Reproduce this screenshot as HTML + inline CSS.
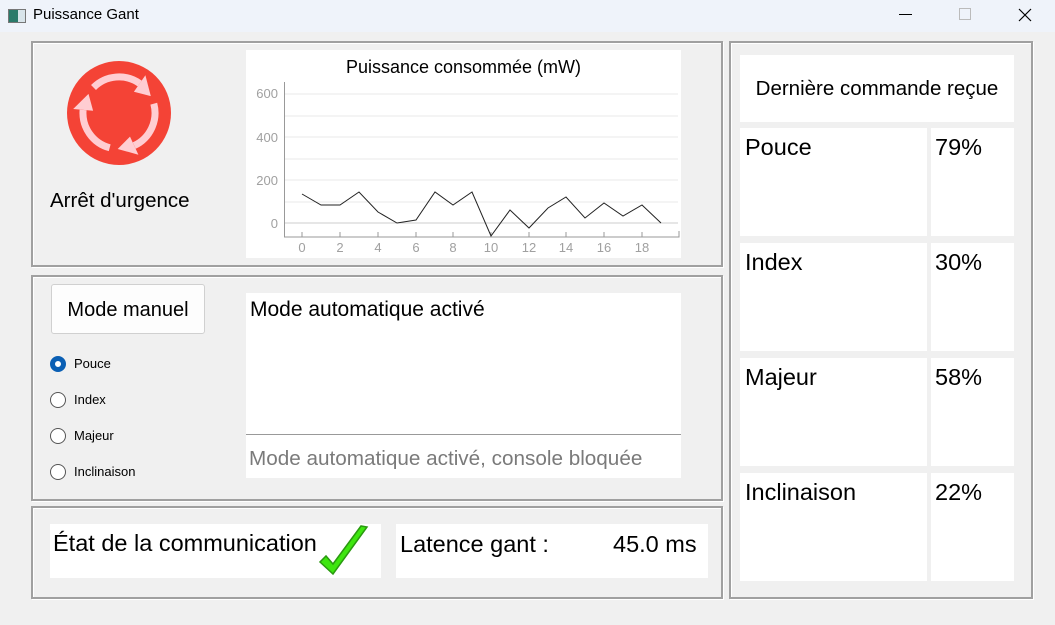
<!DOCTYPE html>
<html><head><meta charset="utf-8"><style>
*{margin:0;padding:0;box-sizing:border-box}
body{width:1055px;height:625px;background:#f0f0f0;font-family:"Liberation Sans","DejaVu Sans",sans-serif;position:relative;overflow:hidden;color:#000}
.a{position:absolute}
.gb{position:absolute;border:2px solid #a0a0a0;box-shadow:inset 1px 1px 0 #fff,1px 1px 0 #fff}
.w{position:absolute;background:#fff}
.radio{position:absolute;left:50px;width:16px;height:16px;border:1.5px solid #555;border-radius:50%;background:#fff}
.rl{position:absolute;left:74px;font-size:13px}
.r{font-size:23.5px}
</style></head><body>
<div class="a" style="left:0;top:0;width:1055px;height:32px;background:#eff3fa"></div>
<div class="a" style="left:8px;top:9px;width:18px;height:14px;border:1px solid #777;background:linear-gradient(90deg,#2a7a6a 0 55%,#d8e4ea 55%)"></div>
<div class="a" style="left:33px;top:6px;font-size:15px">Puissance Gant</div>
<div class="a" style="left:899px;top:14px;width:13px;height:1px;background:#000"></div>
<div class="a" style="left:959px;top:8px;width:12px;height:12px;border:1px solid #bbb"></div>
<svg class="a" style="left:1018px;top:8px" width="14" height="14"><path d="M1 1L13 13M13 1L1 13" stroke="#000" stroke-width="1.2"/></svg>

<div class="gb" style="left:31px;top:41px;width:692px;height:226px"></div>
<div class="gb" style="left:31px;top:275px;width:692px;height:226px"></div>
<div class="gb" style="left:31px;top:506px;width:692px;height:93px"></div>
<div class="gb" style="left:729px;top:41px;width:304px;height:558px"></div>

<svg class="a" style="left:67px;top:61px" width="104" height="104" viewBox="0 0 104 104">
<circle cx="52" cy="52" r="52" fill="#f44336"/>
<g fill="none" stroke="#ffcdd2" stroke-width="7">
<path d="M26.5 26.5A36 36 0 0 1 72.7 22.5"/>
<path d="M86.8 42.7A36 36 0 0 1 67.2 84.6"/>
<path d="M42.7 86.8A36 36 0 0 1 16.1 48.9"/>
</g>
<g fill="#ffcdd2"><path d="M66.9 30.7L78.4 14.3L83.8 35.1Z"/><path d="M63 75.6L71.4 93.7L50.7 88Z"/><path d="M26.1 49.7L6.2 48L21.5 32.9Z"/></g>
</svg>
<div class="a" style="left:50px;top:189px;font-size:20.5px">Arrêt d'urgence</div>

<div class="w" style="left:246px;top:50px;width:435px;height:208px"></div>
<div class="a" style="left:246px;top:57px;width:435px;text-align:center;font-size:18px">Puissance consommée (mW)</div>
<svg class="a" style="left:246px;top:50px" width="435" height="208">
<g stroke="#e8e8e8" stroke-width="1"><line x1="39" y1="44" x2="432" y2="44"/><line x1="39" y1="66" x2="432" y2="66"/><line x1="39" y1="87" x2="432" y2="87"/><line x1="39" y1="109" x2="432" y2="109"/><line x1="39" y1="130" x2="432" y2="130"/><line x1="39" y1="152" x2="432" y2="152"/></g>
<line x1="39" y1="173" x2="432" y2="173" stroke="#ccc"/>
<path d="M38.5 32V187H433V181" stroke="#999" fill="none"/>
<g stroke="#999"><line x1="56" y1="182" x2="56" y2="187"/><line x1="94" y1="182" x2="94" y2="187"/><line x1="132" y1="182" x2="132" y2="187"/><line x1="170" y1="182" x2="170" y2="187"/><line x1="207" y1="182" x2="207" y2="187"/><line x1="245" y1="182" x2="245" y2="187"/><line x1="283" y1="182" x2="283" y2="187"/><line x1="320" y1="182" x2="320" y2="187"/><line x1="358" y1="182" x2="358" y2="187"/><line x1="396" y1="182" x2="396" y2="187"/></g>
<g fill="#a0a0a0" font-size="13" font-family="Liberation Sans,sans-serif" text-anchor="end"><text x="32" y="48">600</text><text x="32" y="92">400</text><text x="32" y="135">200</text><text x="32" y="178">0</text></g>
<g fill="#a0a0a0" font-size="13" font-family="Liberation Sans,sans-serif" text-anchor="middle"><text x="56" y="202">0</text><text x="94" y="202">2</text><text x="132" y="202">4</text><text x="170" y="202">6</text><text x="207" y="202">8</text><text x="245" y="202">10</text><text x="283" y="202">12</text><text x="320" y="202">14</text><text x="358" y="202">16</text><text x="396" y="202">18</text></g>
<polyline fill="none" stroke="#222" stroke-width="1" points="56,144 75,155 94,155 113,142 132,162 151,173 170,170 189,142 207,155 226,142 245,186 264,160 283,178 302,158 320,147 339,168 358,153 377,166 396,155 415,173"/>
</svg>

<div class="a" style="left:51px;top:284px;width:154px;height:50px;background:#fdfdfd;border:1px solid #d0d0d0;border-radius:3px;font-size:20px;text-align:center;line-height:50px">Mode manuel</div>
<div class="radio" style="top:356px;border:5px solid #0a5fb4"></div><div class="rl" style="top:356px">Pouce</div>
<div class="radio" style="top:392px"></div><div class="rl" style="top:392px">Index</div>
<div class="radio" style="top:428px"></div><div class="rl" style="top:428px">Majeur</div>
<div class="radio" style="top:464px"></div><div class="rl" style="top:464px">Inclinaison</div>

<div class="w" style="left:246px;top:293px;width:435px;height:141px"></div>
<div class="a" style="left:250px;top:298px;font-size:21px">Mode automatique activé</div>
<div class="a" style="left:246px;top:434px;width:435px;height:1px;background:#999"></div>
<div class="w" style="left:246px;top:435px;width:435px;height:43px"></div>
<div class="a" style="left:249px;top:447px;font-size:20.7px;color:#7a7a7a">Mode automatique activé, console bloquée</div>

<div class="w" style="left:50px;top:524px;width:331px;height:54px"></div>
<div class="a r" style="left:53px;top:530px">État de la communication</div>
<svg class="a" style="left:317px;top:524px" width="52" height="52"><path d="M3 38L16 50L50 3L44 2L16 40L9 32Z" fill="#3ee60f" stroke="#2a9a10" stroke-width="1.5"/></svg>
<div class="w" style="left:396px;top:524px;width:312px;height:54px"></div>
<div class="a r" style="left:400px;top:531px">Latence gant :</div>
<div class="a r" style="left:613px;top:531px">45.0 ms</div>

<div class="w" style="left:740px;top:55px;width:274px;height:67px;font-size:20.5px;text-align:center;line-height:68px">Dernière commande reçue</div>
<div class="w" style="left:740px;top:128px;width:187px;height:108px"></div><div class="w" style="left:931px;top:128px;width:83px;height:108px"></div>
<div class="w" style="left:740px;top:243px;width:187px;height:108px"></div><div class="w" style="left:931px;top:243px;width:83px;height:108px"></div>
<div class="w" style="left:740px;top:358px;width:187px;height:108px"></div><div class="w" style="left:931px;top:358px;width:83px;height:108px"></div>
<div class="w" style="left:740px;top:473px;width:187px;height:108px"></div><div class="w" style="left:931px;top:473px;width:83px;height:108px"></div>
<div class="a r" style="left:745px;top:134px">Pouce</div><div class="a r" style="left:935px;top:134px">79%</div>
<div class="a r" style="left:745px;top:249px">Index</div><div class="a r" style="left:935px;top:249px">30%</div>
<div class="a r" style="left:745px;top:364px">Majeur</div><div class="a r" style="left:935px;top:364px">58%</div>
<div class="a r" style="left:745px;top:479px">Inclinaison</div><div class="a r" style="left:935px;top:479px">22%</div>
</body></html>
